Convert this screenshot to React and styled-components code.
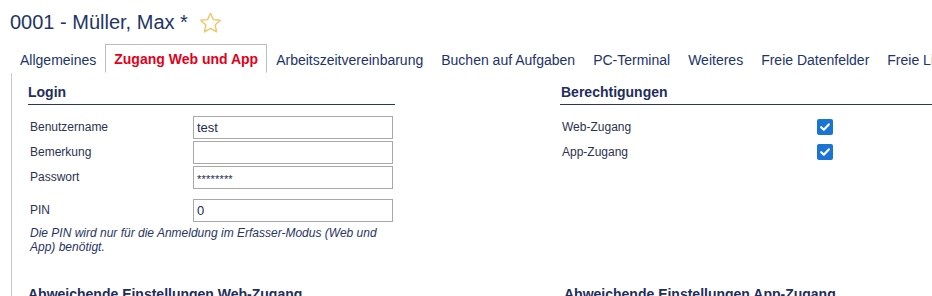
import React from "react";
import styled, { createGlobalStyle } from "styled-components";

const Global = createGlobalStyle`
  html, body { margin: 0; padding: 0; background: #fff; overflow: hidden; }
  body { font-family: "Liberation Sans", Arial, sans-serif; width: 932px; }
`;

const Page = styled.div`
  width: 1100px;
`;

const Header = styled.div`
  display: flex;
  align-items: center;
  height: 44px;
  padding-left: 10px;
  gap: 10px;
`;

const Title = styled.h1`
  margin: 0;
  font-size: 20px;
  font-weight: normal;
  color: #1f3566;
  line-height: 24px;
`;

const Star = styled.svg`
  width: 25px;
  height: 24px;
  margin-top: 2px;
`;

const TabBar = styled.div`
  display: flex;
  margin-left: 11px;
  border-bottom: 1px solid #bdbdbd;
  height: 28px;
`;

const Tab = styled.div`
  box-sizing: border-box;
  height: 29px;
  padding: 1px 8px 0;
  display: flex;
  align-items: center;
  font-size: 14px;
  white-space: nowrap;
  border: 1px solid ${(p) => (p.$active ? "#bdbdbd" : "transparent")};
  border-bottom: ${(p) => (p.$active ? "1px solid #fff" : "none")};
  background: #fff;
  color: ${(p) => (p.$active ? "#e2001a" : "#22336a")};
  font-weight: ${(p) => (p.$active ? "bold" : "normal")};
`;

const Panel = styled.div`
  margin-left: 11px;
  border-left: 1px solid #c8c8c8;
  padding: 10px 0 0 16px;
  height: 240px;
`;

const Columns = styled.div`
  display: grid;
  grid-template-columns: 367px 372px;
  column-gap: ${(p) => p.$gap}px;
`;

const SectionTitle = styled.h2`
  margin: 0;
  font-size: 14px;
  font-weight: bold;
  line-height: 18px;
  color: #232d5c;
  padding-bottom: 3px;
  border-bottom: ${(p) => (p.$plain ? "none" : "1px solid #2a3563")};
  padding-left: ${(p) => p.$indent || 0}px;
  white-space: nowrap;
`;

const Rows = styled.div`
  display: flex;
  flex-direction: column;
  gap: 2px;
  margin-top: 11px;
  padding-left: 2px;
`;

const Row = styled.div`
  display: grid;
  grid-template-columns: ${(p) => p.$label}px 200px;
  align-items: center;
  height: 23px;
  margin-top: ${(p) => p.$space || 0}px;
`;

const Label = styled.span`
  font-size: 12px;
  color: #2c3150;
  position: relative;
  top: -1px;
`;

const Input = styled.div`
  box-sizing: border-box;
  width: 200px;
  height: 23px;
  border: 1px solid #a8a8a8;
  padding: 0 3px;
  display: flex;
  align-items: center;
  font-size: 13px;
  color: #262a55;
`;

const Masked = styled.span`
  font-size: 11px;
  letter-spacing: 0.2px;
  position: relative;
  top: 1px;
`;

const Hint = styled.p`
  margin: 4px 0 0 0;
  padding-left: 2px;
  font-size: 12px;
  font-style: italic;
  line-height: 14px;
  color: #2a3566;
  width: 360px;
`;

const CheckBox = styled.span`
  width: 16px;
  height: 16px;
  border-radius: 2px;
  background: #1a74d4;
  display: flex;
  align-items: center;
  justify-content: center;
  margin-top: -2px;
`;

const Lower = styled.div`
  margin-top: 31px;
`;

const Check = () => (
  <CheckBox>
    <svg width="12" height="12" viewBox="0 0 12 12">
      <path d="M2.2 6.2 L4.8 8.7 L9.8 3.4" fill="none" stroke="#fff" strokeWidth="2.2" strokeLinecap="round" strokeLinejoin="round" />
    </svg>
  </CheckBox>
);

const tabs = [
  "Allgemeines",
  "Zugang Web und App",
  "Arbeitszeitvereinbarung",
  "Buchen auf Aufgaben",
  "PC-Terminal",
  "Weiteres",
  "Freie Datenfelder",
  "Freie Listen",
];

export default function App() {
  return (
    <Page>
      <Global />
      <Header>
        <Title>0001 - Müller, Max *</Title>
        <Star viewBox="0 0 24 24">
          <path
            d="M12 2.2 L14.9 8.6 L21.8 9.3 L16.6 14 L18.1 20.9 L12 17.4 L5.9 20.9 L7.4 14 L2.2 9.3 L9.1 8.6 Z"
            fill="none"
            stroke="#f2c46b"
            strokeWidth="1.4"
            strokeLinejoin="round"
          />
        </Star>
      </Header>
      <TabBar>
        {tabs.map((t, i) => (
          <Tab key={t} $active={i === 1}>
            {t}
          </Tab>
        ))}
      </TabBar>
      <Panel>
        <Columns $gap={165}>
          <div>
            <SectionTitle>Login</SectionTitle>
            <Rows>
              <Row $label={163}>
                <Label>Benutzername</Label>
                <Input>test</Input>
              </Row>
              <Row $label={163}>
                <Label>Bemerkung</Label>
                <Input />
              </Row>
              <Row $label={163}>
                <Label>Passwort</Label>
                <Input>
                  <Masked>********</Masked>
                </Input>
              </Row>
              <Row $label={163} $space={8}>
                <Label>PIN</Label>
                <Input>0</Input>
              </Row>
            </Rows>
            <Hint>
              Die PIN wird nur für die Anmeldung im Erfasser-Modus (Web und App) benötigt.
            </Hint>
          </div>
          <div>
            <SectionTitle $indent={1}>Berechtigungen</SectionTitle>
            <Rows>
              <Row $label={255}>
                <Label>Web-Zugang</Label>
                <Check />
              </Row>
              <Row $label={255}>
                <Label>App-Zugang</Label>
                <Check />
              </Row>
            </Rows>
          </div>
        </Columns>
        <Lower>
          <Columns $gap={169}>
            <SectionTitle $plain>Abweichende Einstellungen Web-Zugang</SectionTitle>
            <SectionTitle $plain>Abweichende Einstellungen App-Zugang</SectionTitle>
          </Columns>
        </Lower>
      </Panel>
    </Page>
  );
}
